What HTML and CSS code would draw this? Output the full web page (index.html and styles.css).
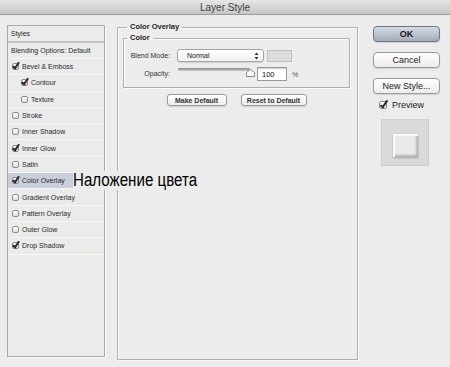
FILE: index.html
```html
<!DOCTYPE html>
<html lang="en">
<head>
  <meta charset="UTF-8">
  <title>Layer Style</title>
  <link rel="stylesheet" href="styles.css">
</head>
<body>
  <div class="titlebar">Layer Style</div>

  <div class="dialog">
    <div class="styles-list">
      <div class="row header">Styles</div>
      <div class="row blending">Blending Options: Default</div>
      <div class="row"><span class="cb checked"></span>Bevel &amp; Emboss</div>
      <div class="row sub"><span class="cb checked"></span>Contour</div>
      <div class="row sub"><span class="cb"></span>Texture</div>
      <div class="row"><span class="cb"></span>Stroke</div>
      <div class="row"><span class="cb"></span>Inner Shadow</div>
      <div class="row"><span class="cb checked"></span>Inner Glow</div>
      <div class="row"><span class="cb"></span>Satin</div>
      <div class="row selected"><span class="cb checked"></span>Color Overlay<span class="note">Наложение цвета</span></div>
      <div class="row"><span class="cb"></span>Gradient Overlay</div>
      <div class="row"><span class="cb"></span>Pattern Overlay</div>
      <div class="row"><span class="cb"></span>Outer Glow</div>
      <div class="row last"><span class="cb checked"></span>Drop Shadow</div>
    </div>

    <fieldset class="panel">
      <legend>Color Overlay</legend>
      <fieldset class="group">
        <legend>Color</legend>
        <div class="field blend">
          <label>Blend Mode:</label>
          <div class="select">
            Normal
            <svg width="5" height="8" viewBox="0 0 5 8"><path d="M2.5 0.5 L4.5 3 H0.5 Z M2.5 7.5 L4.5 5 H0.5 Z" fill="#333"/></svg>
          </div>
          <div class="swatch"></div>
        </div>
        <div class="field opacity">
          <label>Opacity:</label>
          <div class="slider">
            <div class="track"></div>
            <svg class="thumb" width="9" height="8" viewBox="0 0 9 8"><path d="M0.5 7.5 V3.5 L4.5 0.5 L8.5 3.5 V7.5 Z" fill="#fafafa" stroke="#8a8a8a"/></svg>
          </div>
          <div class="num">100</div>
          <span class="pct">%</span>
        </div>
      </fieldset>
      <div class="defaults">
        <button class="btn small make">Make Default</button>
        <button class="btn small reset">Reset to Default</button>
      </div>
    </fieldset>

    <div class="actions">
      <button class="btn big primary">OK</button>
      <button class="btn big">Cancel</button>
      <button class="btn big">New Style...</button>
      <div class="preview-check"><span class="cb big-cb checked"></span>Preview</div>
      <div class="preview"><div class="tile"></div></div>
    </div>
  </div>
</body>
</html>
```

FILE: styles.css
```css
body {
  margin: 0;
  width: 450px;
  height: 367px;
  overflow: hidden;
  background-color: #ececec;
  font-family: "Liberation Sans", Arial, sans-serif;
  color: #222;
}
.titlebar {
  height: 14px;
  line-height: 15px;
  border-bottom: 1px solid #9c9c9c;
  background: linear-gradient(#e6e6e6, #c6c6c6);
  text-align: center;
  font-size: 10px;
  color: #3f3f3f;
}
.dialog {
  display: flex;
  align-items: flex-start;
  padding: 10px 0 0 7px;
}

/* styles list */
.styles-list {
  box-sizing: border-box;
  width: 98px;
  height: 332px;
  margin-right: 12px;
  border: 1px solid #a9a9a9;
  box-shadow: 1px 1px 0 #fff;
  background-color: #ebebeb;
  font-size: 7px;
  color: #2a2a2a;
}
.row {
  position: relative;
  box-sizing: border-box;
  display: flex;
  align-items: center;
  height: 16.3px;
  padding-left: 4px;
  border-bottom: 1px solid #f5f5f5;
  white-space: nowrap;
}
.row.header {
  height: 17px;
  padding-left: 3px;
  border-bottom: 2px solid #c4c4c4;
}
.row.blending {
  height: 16px;
  padding-left: 3px;
}
.row.sub {
  padding-left: 13px;
}
.row.selected {
  background-color: #c8cfdb;
}
.row.last {
  border-bottom-color: #fbfbf0;
}
.note {
  position: absolute;
  left: 65px;
  top: -2px;
  z-index: 2;
  padding-right: 2px;
  background-color: #ececec;
  font-size: 18px;
  line-height: 19px;
  color: #000;
  transform: scaleX(0.84);
  transform-origin: left center;
}

/* checkboxes */
.cb {
  position: relative;
  flex: none;
  box-sizing: border-box;
  width: 7px;
  height: 7px;
  margin-right: 3px;
  border: 1px solid #8c8c8c;
  border-radius: 2px;
  background: linear-gradient(#fff, #dedede);
}
.cb.checked::after {
  content: "";
  position: absolute;
  left: 1px;
  top: -3px;
  width: 2px;
  height: 6px;
  border: solid #2a2a2a;
  border-width: 0 2px 2px 0;
  transform: rotate(35deg);
}
.cb.big-cb {
  width: 8px;
  height: 8px;
  margin-right: 5px;
}
.cb.big-cb::after {
  left: 2px;
  top: -3px;
  height: 7px;
}

/* main panel */
fieldset {
  margin: 0;
  min-width: 0;
  border: 1px solid #b0b0b0;
  box-shadow: 1px 1px 0 #fafafa, inset 1px 1px 0 #fafafa;
}
legend {
  padding: 0 3px;
  font-size: 7.5px;
  font-weight: bold;
  line-height: 10px;
  color: #222;
}
.panel {
  box-sizing: border-box;
  width: 241px;
  height: 338px;
  margin-top: -3px;
  padding: 0 7px 0 5px;
}
.panel > legend {
  margin-left: 4px;
}
.group {
  margin-top: 1px;
  padding: 0 3px 6px 3px;
}
.field {
  display: flex;
  align-items: center;
  font-size: 7px;
  color: #333;
}
.field label {
  width: 43px;
  text-align: right;
}
.field.blend {
  margin-top: 6px;
  height: 13px;
}
.field.opacity {
  margin-top: 5px;
  height: 14px;
  align-items: flex-start;
}
.field.opacity label {
  padding-top: 3px;
}
.select {
  box-sizing: border-box;
  display: flex;
  align-items: center;
  justify-content: space-between;
  width: 87px;
  height: 13px;
  margin-left: 7px;
  padding: 0 4px 0 9px;
  border: 1px solid #a4a4a4;
  border-radius: 3px;
  background: linear-gradient(#fff, #f0f0f0);
  box-shadow: 0 1px 1px rgba(0, 0, 0, 0.12);
  font-size: 7px;
  color: #222;
}
.swatch {
  box-sizing: border-box;
  width: 25px;
  height: 12px;
  margin-left: 3px;
  border: 1px solid #bdbdbd;
  background-color: #dcdcdc;
}
.slider {
  position: relative;
  width: 77px;
  height: 10px;
  margin-left: 8px;
}
.track {
  height: 3px;
  width: 72px;
  margin-top: 1px;
  border-radius: 1px;
  background: linear-gradient(#8a8a8a, #c8c8c8);
}
.thumb {
  position: absolute;
  left: 68px;
  top: 2px;
}
.num {
  box-sizing: border-box;
  width: 30px;
  height: 14px;
  margin-left: 2px;
  padding: 2px 0 0 4px;
  border: 1px solid #9a9a9a;
  background-color: #fff;
  box-shadow: inset 0 1px 1px rgba(0, 0, 0, 0.2);
  font-size: 7.5px;
  color: #111;
}
.pct {
  margin-left: 5px;
  padding-top: 4px;
  font-size: 7px;
  color: #555;
}
.defaults {
  display: flex;
  justify-content: center;
  gap: 14px;
  margin-top: 6px;
}

/* buttons */
.btn {
  box-sizing: border-box;
  padding: 0;
  border: 1px solid #9a9a9a;
  border-radius: 3px;
  background: linear-gradient(#ffffff, #ececec);
  box-shadow: 0 1px 1px rgba(0, 0, 0, 0.12);
  font-family: "Liberation Sans", Arial, sans-serif;
  color: #1a1a1a;
}
.btn.small {
  height: 12px;
  font-size: 7px;
  font-weight: bold;
  color: #333;
}
.btn.make {
  width: 60px;
}
.btn.reset {
  width: 66px;
}
.actions {
  display: flex;
  flex-direction: column;
  width: 67px;
  margin-left: 15px;
  margin-top: 1px;
}
.btn.big {
  height: 16px;
  margin-bottom: 10px;
  border-radius: 4px;
  font-size: 9px;
}
.btn.primary {
  border-color: #6e7786;
  background: linear-gradient(#d6dbe3, #a3acb9);
  font-weight: bold;
}
.preview-check {
  display: flex;
  align-items: center;
  margin: -6px 0 0 6px;
  height: 14px;
  font-size: 9px;
  color: #1a1a1a;
}
.preview {
  box-sizing: border-box;
  width: 48px;
  height: 47px;
  margin: 7px 0 0 8px;
  padding: 14px 0 0 11px;
  border: 1px solid #cdcdcd;
  background-color: #dadada;
}
.tile {
  width: 25px;
  height: 23px;
  background-color: #e9e9e9;
  box-shadow: inset 2px 2px 1px #fbfbfb, inset -2px -2px 2px #b6b6b6, 0 1px 2px rgba(0, 0, 0, 0.25);
}
```
